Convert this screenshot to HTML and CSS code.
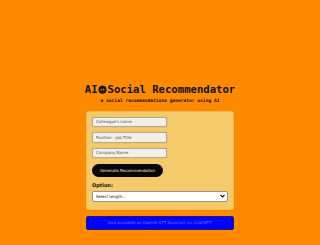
FILE: index.html
```html
<!DOCTYPE html>
<html lang="en">
<head>
<meta charset="utf-8">
<title>AI Social Recommendator</title>
<link rel="stylesheet" href="styles.css">
</head>
<body>
<main class="page">
  <h1 class="title">AI<svg class="bot" viewBox="0 0 10 10" width="9" height="9" aria-hidden="true"><circle cx="5" cy="5.3" r="4.5" fill="#1a1208"/><rect x="2.4" y="3.6" width="5.2" height="3.4" rx="1" fill="#3a2a10"/><circle cx="3.8" cy="5.2" r="0.7" fill="#ff8a00"/><circle cx="6.2" cy="5.2" r="0.7" fill="#ff8a00"/><rect x="4.6" y="0.3" width="0.8" height="1.4" fill="#1a1208"/></svg>Social Recommendator</h1>
  <p class="subtitle">a social recommendations generator using AI</p>
  <form class="card">
    <input class="field" type="text" placeholder="Colleague's name">
    <input class="field" type="text" placeholder="Position - Job Title">
    <input class="field" type="text" placeholder="Company Name">
    <button class="generate" type="button">Generate Recommendation</button>
    <label class="option-label">Option:</label>
    <div class="select-wrap">
      <select class="select">
        <option>Select length...</option>
      </select>
      <svg class="chev" viewBox="0 0 6 4" width="5" height="4" aria-hidden="true"><path d="M0.6 0.8 L3 3.2 L5.4 0.8" fill="none" stroke="#111" stroke-width="1.3"/></svg>
    </div>
  </form>
  <a class="gpt-link" href="#">Also available as OpenAI GPT Assistant on ChatGPT!</a>
</main>
</body>
</html>
```
FILE: styles.css
```css
html, body {
  margin: 0;
  padding: 0;
  background: #ff8a00;
}
body {
  width: 320px;
  height: 245px;
  overflow: hidden;
}
.page {
  width: 148px;
  margin: 0 auto;
  padding-top: 83px;
  display: flex;
  flex-direction: column;
  align-items: stretch;
}
.title {
  margin: 0 -2px;
  font-family: "DejaVu Sans Mono", monospace;
  font-weight: bold;
  font-size: 10.6px;
  line-height: 12px;
  color: #111;
  text-align: center;
  white-space: nowrap;
}
.bot {
  display: inline-block;
  vertical-align: -1px;
  margin: 0 0.5px;
}
.subtitle {
  margin: 2px 0 0;
  font-family: "DejaVu Sans Mono", monospace;
  font-weight: bold;
  font-size: 4.6px;
  line-height: 8px;
  color: #111;
  text-align: center;
  white-space: nowrap;
}
.card {
  margin-top: 6px;
  background: #f4ca6b;
  border: 1px solid #f0bb55;
  border-radius: 2px;
  box-shadow: 0 0 2px rgba(180, 100, 0, 0.35);
  padding: 4.5px 5px 7px;
  display: flex;
  flex-direction: column;
  align-items: flex-start;
}
.field {
  box-sizing: border-box;
  width: 75px;
  height: 10.5px;
  margin: 0 0 5px;
  padding: 0 3px;
  border: 1px solid #b7a98e;
  border-radius: 2px;
  background: #f3f0ea;
  box-shadow: 0 0 1px rgba(0,0,0,0.25);
  font-family: "DejaVu Sans", sans-serif;
  font-size: 4px;
  color: #333;
  outline: none;
}
.field::placeholder {
  color: #555;
}
.generate {
  margin-top: 1px;
  width: 71px;
  height: 12.5px;
  padding: 0;
  border: none;
  border-radius: 7px;
  background: #0a0704;
  color: #eee;
  font-family: "DejaVu Sans", sans-serif;
  font-size: 4px;
  cursor: pointer;
}
.option-label {
  margin-top: 4px;
  font-family: "DejaVu Sans", sans-serif;
  font-weight: bold;
  font-size: 5px;
  line-height: 8px;
  color: #111;
}
.select-wrap {
  position: relative;
  margin-top: 2px;
  width: 100%;
}
.select {
  display: block;
  box-sizing: border-box;
  width: 100%;
  height: 11px;
  padding: 0 3px;
  border: 1px solid #9c9484;
  border-radius: 2px;
  background: #fff;
  font-family: "DejaVu Sans", sans-serif;
  font-size: 4px;
  color: #111;
  appearance: none;
  -webkit-appearance: none;
  outline: none;
}
.chev {
  position: absolute;
  right: 3px;
  top: 3.5px;
  pointer-events: none;
}
.gpt-link {
  display: block;
  box-sizing: border-box;
  margin-top: 6px;
  height: 14px;
  line-height: 12px;
  background: #0000ff;
  border: 1px solid #1b1b6a;
  border-radius: 2px;
  color: #6f7cff;
  font-family: "DejaVu Sans", sans-serif;
  font-size: 4px;
  text-align: center;
  text-decoration: none;
  white-space: nowrap;
}
```
